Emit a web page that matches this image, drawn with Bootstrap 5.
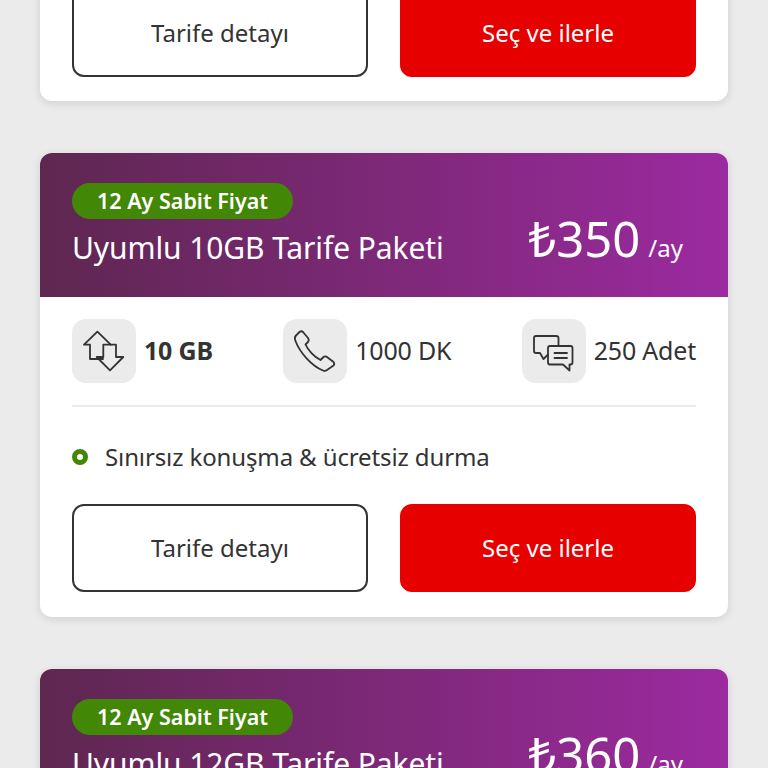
<!DOCTYPE html>
<html lang="tr">
<head>
    <meta charset="UTF-8">
    <meta name="viewport" content="width=device-width, initial-scale=1.0">
    <title>Tarifeler</title>
    <link href="https://cdn.jsdelivr.net/npm/bootstrap@5.3.3/dist/css/bootstrap.min.css" rel="stylesheet">
    <style>
        html, body {
            height: 100vh;
            overflow: hidden;
        }
        body {
            background-color: #ebebeb;
            color: #333;
            font-family: "Noto Sans", "Liberation Sans", sans-serif;
        }
        .plan-list {
            padding: 0 40px;
            display: flex;
            flex-direction: column;
            gap: 52px;
        }
        .plan-card {
            background-color: #fff;
            border-radius: 12px;
            box-shadow: 0 2px 8px rgba(0, 0, 0, .12);
            overflow: hidden;
            flex-shrink: 0;
        }
        /* page is scrolled, only the end of the first card shows */
        .plan-cut {
            margin-top: -35px;
            padding-top: 24px;
        }
        .plan-cut .plan-actions {
            padding-bottom: 24px;
        }
        .plan-head {
            height: 144px;
            padding: 30px 32px 0;
            background: linear-gradient(90deg, #5e2750, #9c2aa0);
            color: #fff;
        }
        .plan-pill {
            display: inline-block;
            width: 221px;
            height: 36px;
            line-height: 36px;
            border-radius: 18px;
            background-color: #428706;
            font-size: 21.5px;
            font-weight: 600;
            text-align: center;
        }
        .plan-title {
            font-size: 30px;
            line-height: 42px;
            margin-top: 8px;
            letter-spacing: -.1px;
        }
        .plan-price {
            font-size: 49px;
            line-height: 60px;
            margin-top: -11px;
            margin-right: 13px;
        }
        .plan-per {
            font-size: 24px;
            margin-left: 8px;
        }
        .plan-stats {
            padding: 22px 32px 0;
        }
        .stat-chip {
            width: 64px;
            height: 64px;
            border-radius: 14px;
            background-color: #ebebeb;
            flex-shrink: 0;
        }
        .stat-chip svg {
            display: block;
            fill: none;
            stroke: #333;
            stroke-width: 1.8;
            stroke-linejoin: round;
            stroke-linecap: round;
        }
        .stat-text {
            font-size: 25px;
            margin-left: 8px;
            white-space: nowrap;
            letter-spacing: -.2px;
        }
        .plan-rule {
            height: 2px;
            margin: 22px 32px 0;
            background-color: #ebebeb;
        }
        .plan-note {
            padding: 2px 32px 0;
            height: 97px;
            font-size: 24px;
            letter-spacing: -.12px;
        }
        .note-dot {
            width: 16px;
            height: 16px;
            border: 5px solid #428706;
            border-radius: 50%;
            margin-right: 17px;
        }
        .plan-actions {
            padding: 0 32px 25px;
            gap: 32px;
        }
        .plan-btn {
            flex: 1 1 0;
            height: 88px;
            border-radius: 12px;
            font-size: 24px;
            display: flex;
            align-items: center;
            justify-content: center;
        }
        .plan-btn-line, .plan-btn-line:hover {
            border: 2px solid #333;
            color: #333;
            background-color: #fff;
        }
        .plan-btn-red, .plan-btn-red:hover {
            border: 2px solid #e60000;
            color: #fff;
            background-color: #e60000;
        }
    </style>
</head>
<body>

<div class="plan-list">

    <div class="plan-card plan-cut">
        <div class="plan-actions d-flex">
            <button type="button" class="btn plan-btn plan-btn-line">Tarife detayı</button>
            <button type="button" class="btn plan-btn plan-btn-red">Seç ve ilerle</button>
        </div>
    </div>

    <div class="plan-card">
        <div class="plan-head">
            <span class="plan-pill">12 Ay Sabit Fiyat</span>
            <div class="d-flex justify-content-between align-items-start">
                <div class="plan-title">Uyumlu 10GB Tarife Paketi</div>
                <div class="plan-price">₺350<span class="plan-per">/ay</span></div>
            </div>
        </div>
        <div class="plan-stats d-flex justify-content-between">
            <div class="d-flex align-items-center">
                <div class="stat-chip">
                    <svg width="64" height="64" viewBox="0 0 64 64">
                        <path d="M31 40H18V25.700H12L25.400 12.700 38.700 25.700"/>
                        <path d="M38 51.300 24.700 38H31.300V25.700H44V38H51.300Z"/>
                    </svg>
                </div>
                <span class="stat-text fw-bold">10 GB</span>
            </div>
            <div class="d-flex align-items-center">
                <div class="stat-chip">
                    <svg width="64" height="64" viewBox="0 0 64 64">
                        <path d="M16.500 13 13 16.500Q11 18.500 12.500 22C17 34 29 47 40 51.500Q42 52.500 44 51L50.500 46.500Q52 45 50.500 43L44 38Q42 36.500 40 38.500L37.500 41C31 38 25 31 22.500 25.500L25 23Q26.500 21 25 19L20 13Q18.500 11.500 16.500 13Z"/>
                    </svg>
                </div>
                <span class="stat-text">1000 DK</span>
            </div>
            <div class="d-flex align-items-center">
                <div class="stat-chip">
                    <svg width="64" height="64" viewBox="0 0 64 64">
                        <path d="M25.500 36 21.500 40 18 34H14Q12 34 12 32V19Q12 17 14 17H34Q36.500 17 36.500 19V26.500"/>
                        <path d="M28 27H48.500Q50.500 27 50.500 29V43.500Q50.500 45.500 48.500 45.500H47.500V51.500L41 45.500H28Q26 45.500 26 43.500V29Q26 27 28 27Z"/>
                        <path d="M32.500 34H45M32.500 39H45"/>
                    </svg>
                </div>
                <span class="stat-text">250 Adet</span>
            </div>
        </div>
        <div class="plan-rule"></div>
        <div class="plan-note d-flex align-items-center">
            <span class="note-dot"></span>
            <span>Sınırsız konuşma &amp; ücretsiz durma</span>
        </div>
        <div class="plan-actions d-flex">
            <button type="button" class="btn plan-btn plan-btn-line">Tarife detayı</button>
            <button type="button" class="btn plan-btn plan-btn-red">Seç ve ilerle</button>
        </div>
    </div>

    <div class="plan-card">
        <div class="plan-head">
            <span class="plan-pill">12 Ay Sabit Fiyat</span>
            <div class="d-flex justify-content-between align-items-start">
                <div class="plan-title">Uyumlu 12GB Tarife Paketi</div>
                <div class="plan-price">₺360<span class="plan-per">/ay</span></div>
            </div>
        </div>
    </div>

</div>

<script src="https://cdn.jsdelivr.net/npm/bootstrap@5.3.3/dist/js/bootstrap.bundle.min.js"></script>
</body>
</html>
